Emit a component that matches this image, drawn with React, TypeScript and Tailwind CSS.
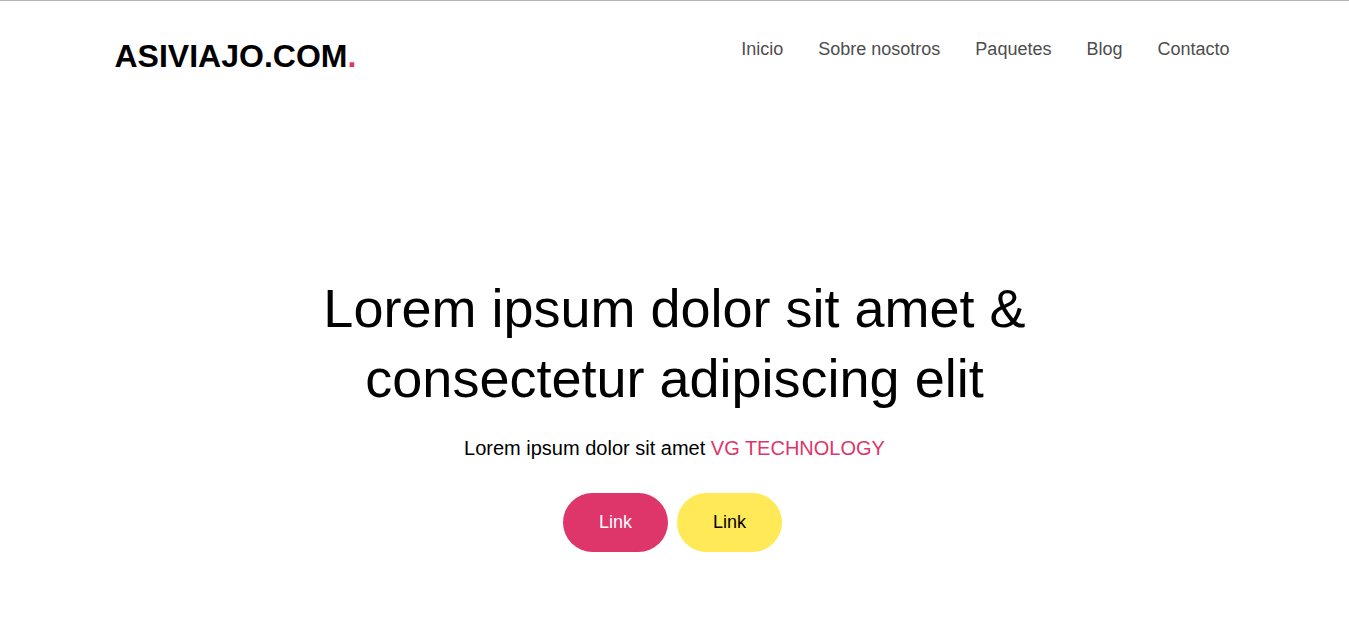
const links = ["Inicio", "Sobre nosotros", "Paquetes", "Blog", "Contacto"];

function Header() {
  return (
    <header className="mx-auto flex w-full max-w-[1150px] items-start justify-between px-[15px] pt-[31px]">
      <a href="#inicio" className="text-[32px] leading-[48px] font-bold text-black">
        ASIVIAJO.COM<span className="text-[#de356a]">.</span>
      </a>
      <nav aria-label="Principal" className="pt-1">
        <ul className="flex gap-[35px] pr-[5px]">
          {links.map((label) => (
            <li key={label}>
              <a href="#" className="text-[18px] leading-[27px] text-[#4d4d4d] hover:text-black">
                {label}
              </a>
            </li>
          ))}
        </ul>
      </nav>
    </header>
  );
}

function Hero() {
  return (
    <main className="mx-auto mt-[193px] max-w-[760px] pb-[85px] text-center">
      <h1 className="text-[54px] leading-[70px] text-black">
        Lorem ipsum dolor sit amet &amp; consectetur adipiscing elit
      </h1>
      <p className="mt-5 text-[20px] leading-[30px] text-black">
        Lorem ipsum dolor sit amet{" "}
        <a href="#" className="text-[#de356a]">VG TECHNOLOGY</a>
      </p>
      <div className="mt-[30px] flex justify-center gap-[9px] pr-1 text-[18px] leading-[27px]">
        <a href="#" className="rounded-full bg-[#de356a] px-9 py-4 text-white">Link</a>
        <a href="#" className="rounded-full bg-[#ffe957] px-9 py-4 text-black">Link</a>
      </div>
    </main>
  );
}

export default function App() {
  return (
    <div className="border-t border-[#b3b3b3] bg-white font-['Liberation_Sans',Arial,sans-serif]">
      <Header />
      <Hero />
    </div>
  );
}
